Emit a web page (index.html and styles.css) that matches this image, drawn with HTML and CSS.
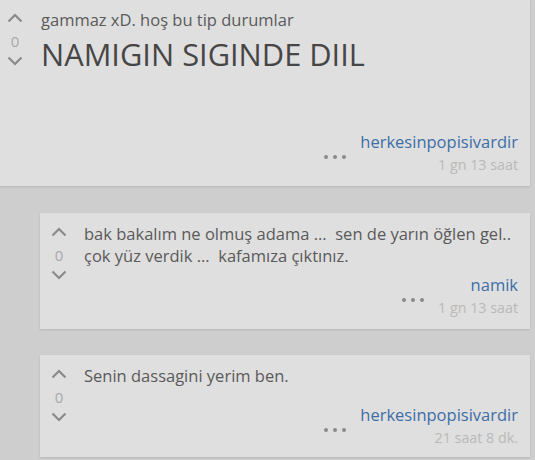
FILE: index.html
```html
<!DOCTYPE html>
<html lang="tr">
<head>
  <meta charset="UTF-8" />
  <meta name="viewport" content="width=device-width, initial-scale=1.0"/>
  <title>Yorumlar</title>
  <link rel="stylesheet" href="styles.css">
</head>
<body>
  <div class="thread">

    <div class="entry main">
      <div class="vote">
        <svg class="chev" width="16" height="10" viewBox="0 0 16 10"><polyline points="1.5,8.5 8,2 14.5,8.5" /></svg>
        <span class="score">0</span>
        <svg class="chev" width="16" height="10" viewBox="0 0 16 10"><polyline points="1.5,1.5 8,8 14.5,1.5" /></svg>
      </div>
      <div class="body">
        <div class="text">
          gammaz xD. hoş bu tip durumlar
          <div class="big">NAMIGIN SIGINDE DIIL</div>
        </div>
        <div class="meta">
          <span class="dots"><i></i><i></i><i></i></span>
          <div class="who">
            <a href="#" class="user">herkesinpopisivardir</a>
            <span class="time">1 gn 13 saat</span>
          </div>
        </div>
      </div>
    </div>

    <div class="entry reply">
      <div class="vote">
        <svg class="chev" width="16" height="10" viewBox="0 0 16 10"><polyline points="1.5,8.5 8,2 14.5,8.5" /></svg>
        <span class="score">0</span>
        <svg class="chev" width="16" height="10" viewBox="0 0 16 10"><polyline points="1.5,1.5 8,8 14.5,1.5" /></svg>
      </div>
      <div class="body">
        <div class="text">bak bakalım ne olmuş adama ...&nbsp; sen de yarın öğlen gel.. çok yüz verdik ...&nbsp; kafamıza çıktınız.</div>
        <div class="meta">
          <span class="dots"><i></i><i></i><i></i></span>
          <div class="who">
            <a href="#" class="user">namik</a>
            <span class="time">1 gn 13 saat</span>
          </div>
        </div>
      </div>
    </div>

    <div class="entry reply">
      <div class="vote">
        <svg class="chev" width="16" height="10" viewBox="0 0 16 10"><polyline points="1.5,8.5 8,2 14.5,8.5" /></svg>
        <span class="score">0</span>
        <svg class="chev" width="16" height="10" viewBox="0 0 16 10"><polyline points="1.5,1.5 8,8 14.5,1.5" /></svg>
      </div>
      <div class="body">
        <div class="text">Senin dassagini yerim ben.</div>
        <div class="meta">
          <span class="dots"><i></i><i></i><i></i></span>
          <div class="who">
            <a href="#" class="user">herkesinpopisivardir</a>
            <span class="time">21 saat 8 dk.</span>
          </div>
        </div>
      </div>
    </div>

  </div>
</body>
</html>
```

FILE: styles.css
```css
:root {
  --bg: #cecece;
  --card: #dfdfdf;
  --text: #5a5a5a;
  --link: #3d6ea6;
  --muted: #b9b9b9;
  --icon: #8a8a8a;
}

body {
  margin: 0;
  font-family: 'Open Sans', sans-serif;
  background: var(--bg);
  color: var(--text);
}

.thread {
  width: 530px;
  padding-bottom: 3px;
}

.entry {
  display: flex;
  background: var(--card);
  padding: 10px 12px 10px 4px;
  box-shadow: 0 1px 2px rgba(0,0,0,0.12);
}

.entry.main {
  padding-left: 0;
  padding-top: 9px;
  margin-bottom: 27px;
}

.entry.reply {
  margin-left: 40px;
  margin-bottom: 26px;
}

.entry.reply:last-child {
  margin-bottom: 0;
  padding-bottom: 8px;
}

.vote {
  width: 30px;
  flex-shrink: 0;
  display: flex;
  flex-direction: column;
  align-items: center;
  padding-top: 4px;
}

.chev {
  display: block;
}

.chev polyline {
  fill: none;
  stroke: var(--icon);
  stroke-width: 2.2;
}

.score {
  font-size: 15px;
  line-height: 22px;
  margin: 7px 0 4px;
  color: #a8a8a8;
}

.body {
  flex: 1;
  padding-left: 10px;
}

.main .body {
  padding-left: 11px;
}

.text {
  font-size: 16.5px;
  line-height: 22px;
  min-height: 32px;
  margin-bottom: 7px;
}

.main .text {
  min-height: 113px;
  margin-bottom: 9px;
}

.big {
  font-size: 30.8px;
  line-height: 42px;
  margin-top: 2px;
  color: #464646;
}

.meta {
  display: flex;
  justify-content: flex-end;
  align-items: center;
  gap: 14px;
}

.dots {
  display: flex;
  gap: 5px;
  margin-top: 6px;
}

.dots i {
  width: 4px;
  height: 4px;
  border-radius: 50%;
  background: var(--icon);
}

.who {
  display: flex;
  flex-direction: column;
  align-items: flex-end;
}

.user {
  color: var(--link);
  text-decoration: none;
  font-size: 16.5px;
  line-height: 22px;
}

.time {
  color: var(--muted);
  font-size: 14.3px;
  line-height: 23px;
}
```
